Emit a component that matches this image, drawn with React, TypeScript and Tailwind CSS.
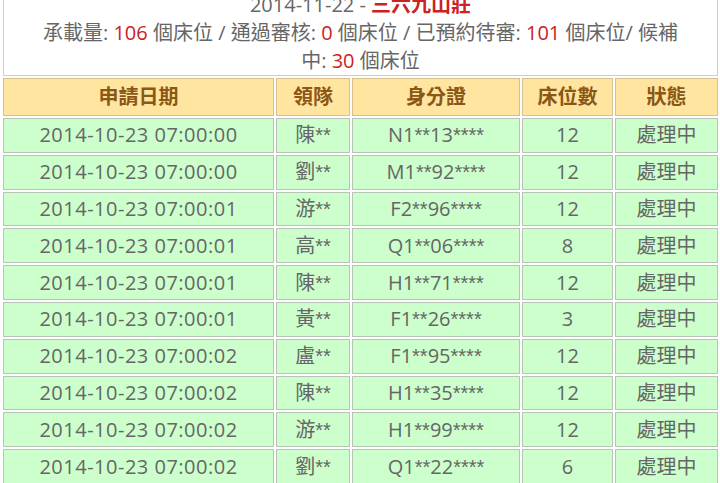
import React from "react";

const rows: [string, string, string, string][] = [
  ["2014-10-23 07:00:00", "陳**", "N1**13****", "12"],
  ["2014-10-23 07:00:00", "劉**", "M1**92****", "12"],
  ["2014-10-23 07:00:01", "游**", "F2**96****", "12"],
  ["2014-10-23 07:00:01", "高**", "Q1**06****", "8"],
  ["2014-10-23 07:00:01", "陳**", "H1**71****", "12"],
  ["2014-10-23 07:00:01", "黃**", "F1**26****", "3"],
  ["2014-10-23 07:00:02", "盧**", "F1**95****", "12"],
  ["2014-10-23 07:00:02", "陳**", "H1**35****", "12"],
  ["2014-10-23 07:00:02", "游**", "H1**99****", "12"],
  ["2014-10-23 07:00:02", "劉**", "Q1**22****", "6"],
];

function Masked({ text }: { text: string }) {
  const parts = text.split(/(\*+)/).filter((p) => p.length > 0);
  return (
    <>
      {parts.map((p, i) =>
        p.startsWith("*") ? (
          <span key={i} className="font-['Liberation_Sans',sans-serif]">
            {p}
          </span>
        ) : (
          <span key={i}>{p}</span>
        )
      )}
    </>
  );
}

const headCell =
  "h-[38px] flex items-center justify-center bg-[#ffe59f] border border-[#d8c08c] text-[#8a5716] font-bold text-[20px]";
const bodyCell =
  "h-[34.8px] flex items-center justify-center bg-[#ccffcc] border border-[#b9c4b9] text-[#666666] text-[20px]";

export default function App() {
  return (
    <div className="w-[720px] h-[483px] overflow-hidden bg-white font-['Open_Sans','Noto_Sans_CJK_TC',sans-serif]">
      <div className="mt-[-10px] ml-[3px] grid grid-cols-[271px_74px_168px_91px_103px] gap-[2px]">
        <div className="col-span-5 border border-[#cccccc] bg-white text-center text-[20px] leading-[28px] text-[#666666]">
          <div>
            2014-11-22 - <span className="text-[#cc2222] font-bold">三六九山莊</span>
          </div>
          <div className="whitespace-nowrap">
            承載量: <span className="text-[#cc2222]">106</span> 個床位 / 通過審核:{" "}
            <span className="text-[#cc2222]">0</span> 個床位 / 已預約待審:{" "}
            <span className="text-[#cc2222]">101</span> 個床位/ 候補
          </div>
          <div>
            中: <span className="text-[#cc2222]">30</span> 個床位
          </div>
        </div>

        <div className={headCell}>申請日期</div>
        <div className={headCell}>領隊</div>
        <div className={headCell}>身分證</div>
        <div className={headCell}>床位數</div>
        <div className={headCell}>狀態</div>

        {rows.map((r, i) => (
          <React.Fragment key={i}>
            <div className={bodyCell + " tracking-[0.5px]"}>{r[0]}</div>
            <div className={bodyCell}>
              <Masked text={r[1]} />
            </div>
            <div className={bodyCell}>
              <Masked text={r[2]} />
            </div>
            <div className={bodyCell}>{r[3]}</div>
            <div className={bodyCell}>處理中</div>
          </React.Fragment>
        ))}
      </div>
    </div>
  );
}
